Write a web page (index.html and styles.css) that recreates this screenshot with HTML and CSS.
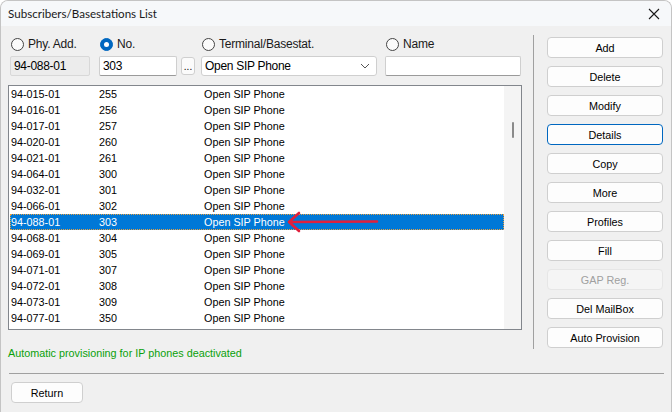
FILE: index.html
```html
<!DOCTYPE html>
<html>
<head>
<meta charset="utf-8">
<title>Subscribers/Basestations List</title>
<link rel="stylesheet" href="styles.css">
</head>
<body>
<div class="window">
  <div class="titlebar">
    <span class="title">Subscribers/Basestations List</span>
    <svg class="close" width="12" height="12" viewBox="0 0 12 12"><path d="M1 1 L11 11 M11 1 L1 11" stroke="#1a1a1a" stroke-width="1.1" fill="none"/></svg>
  </div>
  <div class="content">
    <div class="main">
      <div class="left">
        <div class="search">
          <label class="radio"><span class="dot"></span>Phy. Add.</label>
          <label class="radio"><span class="dot checked"></span>No.</label>
          <label class="radio"><span class="dot"></span>Terminal/Basestat.</label>
          <label class="radio"><span class="dot"></span>Name</label>

          <div class="field disabled w80">94-088-01</div>
          <div class="fieldgroup">
            <div class="field w78">303</div>
            <div class="dots">...</div>
          </div>
          <div class="combo">
            <span>Open SIP Phone</span>
            <svg width="10" height="6" viewBox="0 0 10 6"><path d="M1 1 L5 5 L9 1" stroke="#555" stroke-width="1" fill="none"/></svg>
          </div>
          <div class="field w136"></div>
        </div>

        <div class="listbox">
          <div class="rows">
            <div class="row"><span class="c1">94-015-01</span><span class="c2">255</span><span class="c3">Open SIP Phone</span></div>
            <div class="row"><span class="c1">94-016-01</span><span class="c2">256</span><span class="c3">Open SIP Phone</span></div>
            <div class="row"><span class="c1">94-017-01</span><span class="c2">257</span><span class="c3">Open SIP Phone</span></div>
            <div class="row"><span class="c1">94-020-01</span><span class="c2">260</span><span class="c3">Open SIP Phone</span></div>
            <div class="row"><span class="c1">94-021-01</span><span class="c2">261</span><span class="c3">Open SIP Phone</span></div>
            <div class="row"><span class="c1">94-064-01</span><span class="c2">300</span><span class="c3">Open SIP Phone</span></div>
            <div class="row"><span class="c1">94-032-01</span><span class="c2">301</span><span class="c3">Open SIP Phone</span></div>
            <div class="row"><span class="c1">94-066-01</span><span class="c2">302</span><span class="c3">Open SIP Phone</span></div>
            <div class="row selected"><span class="c1">94-088-01</span><span class="c2">303</span><span class="c3">Open SIP Phone</span></div>
            <div class="row"><span class="c1">94-068-01</span><span class="c2">304</span><span class="c3">Open SIP Phone</span></div>
            <div class="row"><span class="c1">94-069-01</span><span class="c2">305</span><span class="c3">Open SIP Phone</span></div>
            <div class="row"><span class="c1">94-071-01</span><span class="c2">307</span><span class="c3">Open SIP Phone</span></div>
            <div class="row"><span class="c1">94-072-01</span><span class="c2">308</span><span class="c3">Open SIP Phone</span></div>
            <div class="row"><span class="c1">94-073-01</span><span class="c2">309</span><span class="c3">Open SIP Phone</span></div>
            <div class="row"><span class="c1">94-077-01</span><span class="c2">350</span><span class="c3">Open SIP Phone</span></div>
          </div>
          <div class="scrollbar"><div class="thumb"></div></div>
          <svg class="arrow" width="96" height="24" viewBox="0 0 96 24"><path d="M4 12 L92 11.5 M14 3 L4 12 L14 21" stroke="#e0203c" stroke-width="2.6" fill="none" stroke-linecap="round" stroke-linejoin="round"/></svg>
        </div>

        <div class="status">Automatic provisioning for IP phones deactivated</div>
      </div>

      <div class="vsep"></div>

      <div class="buttons">
        <div class="btn">Add</div>
        <div class="btn">Delete</div>
        <div class="btn">Modify</div>
        <div class="btn focus">Details</div>
        <div class="btn">Copy</div>
        <div class="btn">More</div>
        <div class="btn">Profiles</div>
        <div class="btn">Fill</div>
        <div class="btn disabled">GAP Reg.</div>
        <div class="btn">Del MailBox</div>
        <div class="btn">Auto Provision</div>
      </div>
    </div>

    <div class="hsep"></div>
    <div class="btn return">Return</div>
  </div>
</div>
</body>
</html>
```

FILE: styles.css
```css
* { box-sizing: border-box; }

html, body {
  margin: 0;
  padding: 0;
  background: #ffffff;
}

body {
  font-family: "Liberation Sans", Arial, sans-serif;
  font-size: 10.8px;
  color: #000;
}

.window {
  width: 672px;
  height: 412px;
  background: #f0f0f0;
  border: 1px solid #c4c4c4;
  border-bottom: none;
  border-radius: 8px 8px 0 0;
  overflow: hidden;
  display: flex;
  flex-direction: column;
}

.titlebar {
  height: 25px;
  background: #f6f8fa;
  display: flex;
  align-items: center;
  justify-content: space-between;
  padding: 0 11px 0 7px;
  flex: none;
}

.title {
  font-family: Lato, "Open Sans", sans-serif;
  font-size: 11.6px;
  color: #1a1a1a;
}

.close { display: block; }

.content {
  padding: 9px 0 0 7px;
  display: flex;
  flex-direction: column;
}

.main {
  display: flex;
  align-items: flex-start;
}

.left {
  width: 514px;
  display: flex;
  flex-direction: column;
}

.search {
  display: grid;
  grid-template-columns: 89px 102px 184px 136px;
  grid-template-rows: 16px 20px;
  row-gap: 4px;
  padding-left: 2px;
  margin-top: 1px;
}

.radio {
  display: flex;
  align-items: center;
  gap: 4px;
  font-size: 12px;
  letter-spacing: -0.2px;
  color: #1a1a1a;
  white-space: nowrap;
}

.dot {
  width: 13px;
  height: 13px;
  border-radius: 50%;
  border: 1px solid #444;
  background: #fbfbfb;
  flex: none;
  position: relative;
  margin-left: 1px;
}

.dot.checked {
  background: #0067c0;
  border-color: #0067c0;
}

.dot.checked::after {
  content: "";
  position: absolute;
  left: 3px;
  top: 3px;
  width: 5px;
  height: 5px;
  border-radius: 50%;
  background: #fff;
}

.field {
  height: 20px;
  background: #fff;
  border: 1px solid #cfcfcf;
  border-bottom-color: #9a9a9a;
  border-radius: 2px;
  padding: 0 0 0 3px;
  line-height: 18px;
  font-size: 12px;
  letter-spacing: -0.3px;
}

.field.disabled {
  background: #ececec;
  border-color: #d8d8d8;
}

.w80 { width: 80px; }
.w78 { width: 78px; }
.w136 { width: 136px; }

.fieldgroup {
  display: flex;
  gap: 4px;
}

.dots {
  width: 14px;
  height: 18px;
  margin-top: 1px;
  border: 1px solid #cfcfcf;
  border-radius: 3px;
  background: #fbfbfb;
  font-size: 10px;
  text-align: center;
  line-height: 18px;
}

.combo {
  width: 176px;
  height: 20px;
  background: #fff;
  border: 1px solid #cfcfcf;
  border-radius: 3px;
  display: flex;
  align-items: center;
  justify-content: space-between;
  padding: 0 6px 0 3px;
  font-size: 12px;
  letter-spacing: -0.3px;
}

.listbox {
  margin-top: 9px;
  height: 245px;
  border: 1px solid #82868c;
  background: #fff;
  display: flex;
  position: relative;
}

.rows {
  width: 495px;
  padding-left: 1px;
}

.row {
  height: 16px;
  line-height: 16px;
  display: flex;
  padding-left: 1px;
  white-space: nowrap;
}

.c1 { width: 88px; }
.c2 { width: 105px; }
.c3 { flex: 1; }

.row.selected {
  background: #0078d7;
  color: #fff;
  outline: 1px dotted #e8a040;
  outline-offset: -1px;
}

.scrollbar {
  flex: 1;
  background: #f4f4f4;
  position: relative;
}

.thumb {
  position: absolute;
  left: 8px;
  top: 36px;
  width: 2px;
  height: 16px;
  background: #8a8a8a;
  border-radius: 1px;
}

.arrow {
  position: absolute;
  left: 276px;
  top: 124px;
}

.status {
  margin-top: 15px;
  height: 16px;
  line-height: 16px;
  color: #0aa00a;
}

.vsep {
  width: 1px;
  height: 314px;
  margin-left: 11px;
  background: #a0a0a0;
}

.buttons {
  margin-left: 13px;
  margin-top: 2px;
  width: 116px;
  display: flex;
  flex-direction: column;
  gap: 8px;
}

.btn {
  height: 21px;
  border: 1px solid #cfcfcf;
  border-radius: 4px;
  background: #fdfdfd;
  text-align: center;
  line-height: 21px;
}

.btn.focus {
  border-color: #0067c0;
}

.btn.disabled {
  background: #f5f5f5;
  border-color: #e6e6e6;
  color: #a0a0a0;
}

.hsep {
  margin-top: 12px;
  width: 655px;
  margin-left: 1px;
  height: 1px;
  background: #a0a0a0;
}

.btn.return {
  margin-top: 8px;
  margin-left: 3px;
  width: 72px;
}
```
